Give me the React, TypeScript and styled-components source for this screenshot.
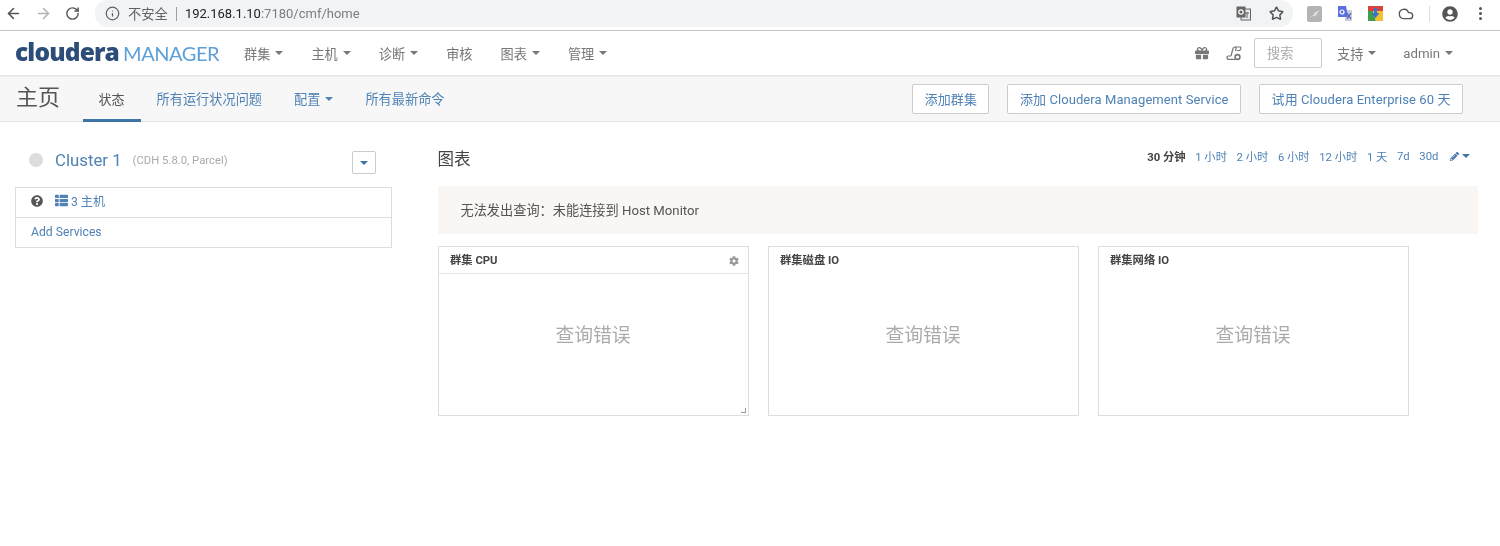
import styled, { createGlobalStyle } from "styled-components";
import { ArrowLeft, ArrowRight, RotateCw, Info, Star, Cloud } from "lucide-react";
import { FaCog, FaGift, FaPencilAlt, FaQuestionCircle, FaThList, FaUserCircle } from "react-icons/fa";

const GlobalStyle = createGlobalStyle`
  html, body {
    margin: 0;
    background: #fff;
    font-family: Roboto, "Noto Sans CJK SC", sans-serif;
    font-size: 13px;
    color: #555;
  }
`;

const Page = styled.div`
  width: 1500px;
  height: 546px;
  overflow: hidden;
  filter: blur(0.4px);
`;

const BrowserBar = styled.div`
  height: 31px;
  box-sizing: border-box;
  border-bottom: 1px solid #c4c5c7;
  display: flex;
  align-items: flex-start;
  padding-left: 5px;
  color: #5f6368;
`;

const BrowserButtons = styled.div`
  width: 90px;
  height: 27px;
  display: flex;
  align-items: center;
  gap: 13px;
`;

const Omnibox = styled.div`
  width: 1198px;
  height: 27px;
  box-sizing: border-box;
  background: #f1f3f4;
  border-radius: 13px;
  display: flex;
  align-items: center;
  padding: 0 9px 0 10px;
`;

const InsecureLabel = styled.span`
  margin-left: 8px;
  color: #5f6368;
  font-size: 13.3px;
`;

const Divider = styled.span`
  width: 1px;
  height: 14px;
  background: #9aa0a6;
  margin: 0 8px;
`;

const Host = styled.span`
  color: #202124;
  font-size: 13px;
`;

const HostRest = styled.span`
  color: #7a7e83;
  font-size: 13px;
`;

const OmniIcons = styled.div`
  margin-left: auto;
  display: flex;
  align-items: center;
  gap: 18px;
`;

const Extensions = styled.div`
  height: 27px;
  display: flex;
  align-items: center;
  gap: 15px;
  margin-left: 14px;
`;

const ToolbarRule = styled.span`
  width: 1px;
  height: 16px;
  background: #dadce0;
  margin-right: -3px;
`;

const MenuDots = styled.span`
  display: flex;
  flex-direction: column;
  gap: 2px;
  margin-left: 6px;
  span {
    width: 3px;
    height: 3px;
    border-radius: 50%;
    background: #555;
  }
`;

const NavBar = styled.div`
  height: 45px;
  box-sizing: border-box;
  border-bottom: 1px solid #e8e8e8;
  display: flex;
  align-items: center;
  padding: 0 47px 0 15px;
  font-size: 13.2px;
`;

const Logo = styled.div`
  width: 229px;
  display: flex;
  align-items: baseline;
  white-space: nowrap;
  margin-top: -3px;
`;

const LogoMain = styled.span`
  font-family: "Open Sans", sans-serif;
  font-weight: 800;
  font-size: 24.5px;
  letter-spacing: -0.85px;
  color: #2b4d78;
`;

const LogoSub = styled.span`
  font-family: Lato, sans-serif;
  font-size: 20px;
  letter-spacing: -0.45px;
  color: #5d9fd8;
  margin-left: 4px;
`;

const NavItems = styled.div`
  display: flex;
  gap: 28px;
`;

const NavItem = styled.span<{ $gap?: number }>`
  color: #777;
  display: inline-flex;
  align-items: center;
  white-space: nowrap;
  margin-left: ${(p) => p.$gap || 0}px;
`;

const Caret = styled.span<{ $color?: string; $gap?: number }>`
  display: inline-block;
  width: 0;
  height: 0;
  margin-left: ${(p) => (p.$gap === undefined ? 5 : p.$gap)}px;
  border-left: 4px solid transparent;
  border-right: 4px solid transparent;
  border-top: 4px solid ${(p) => p.$color || "#777"};
`;

const NavRight = styled.div`
  margin-left: auto;
  display: flex;
  align-items: center;
  color: #777;
`;

const NavIcon = styled.span`
  display: flex;
  margin-right: 12px;
  & + & {
    margin-left: 5px;
  }
`;

const SearchBox = styled.div`
  width: 68px;
  height: 30px;
  box-sizing: border-box;
  margin-right: 15px;
  border: 1px solid #ccc;
  border-radius: 2px;
  padding-left: 12px;
  line-height: 29px;
  color: #aaa;
`;

const SubBar = styled.div`
  height: 46px;
  box-sizing: border-box;
  background: #f7f7f7;
  border-top: 1px solid #eee;
  border-bottom: 1px solid #e5e5e5;
  display: flex;
  padding: 0 37px 0 16px;
  font-size: 13.2px;
`;

const PageTitle = styled.h1`
  margin: 0 23px 0 0;
  font-size: 22px;
  font-weight: 400;
  line-height: 42px;
  color: #555;
`;

const Tab = styled.a<{ $active?: boolean }>`
  height: 45px;
  box-sizing: border-box;
  padding: 1px 16px 0 ${(p) => (p.$active ? "15.5px" : "16px")};
  display: flex;
  align-items: center;
  font-size: ${(p) => (p.$active ? "13px" : "inherit")};
  color: ${(p) => (p.$active ? "#555" : "#4f82b5")};
  border-bottom: 3px solid ${(p) => (p.$active ? "#3f74a8" : "transparent")};
  white-space: nowrap;
`;

const SubActions = styled.div`
  margin-left: auto;
  display: flex;
  gap: 18px;
  padding-top: 7px;
`;

const ActionButton = styled.button`
  height: 30px;
  box-sizing: border-box;
  background: #fff;
  border: 1px solid #ccc;
  border-radius: 2px;
  padding: 0 11.5px 2px;
  font: inherit;
  font-size: 13px;
  letter-spacing: 0.08px;
  color: #4f82b5;
  white-space: nowrap;
`;

const Content = styled.div`
  display: flex;
  padding: 0 22px 0 15px;
`;

const LeftColumn = styled.div`
  width: 377px;
  margin-right: 45.5px;
  flex: none;
`;

const ClusterHead = styled.div`
  height: 65px;
  display: flex;
  align-items: center;
  padding: 11px 16px 0 14px;
  box-sizing: border-box;
`;

const StatusDot = styled.span`
  width: 14px;
  height: 14px;
  border-radius: 50%;
  background: #dcdcdc;
  margin-right: 12px;
`;

const ClusterName = styled.a`
  font-size: 16.8px;
  color: #4f82b5;
`;

const ClusterMeta = styled.span`
  margin-left: 11px;
  font-size: 11.3px;
  color: #aaa;
`;

const DropButton = styled.button`
  margin-left: auto;
  width: 24px;
  height: 23px;
  margin-top: 5px;
  padding: 0;
  background: #fff;
  border: 1px solid #ccc;
  border-radius: 2px;
  display: flex;
  align-items: center;
  justify-content: center;
`;

const ServiceTable = styled.div`
  border: 1px solid #ddd;
`;

const ServiceRow = styled.div`
  height: 29px;
  box-sizing: border-box;
  display: flex;
  align-items: center;
  padding: 0 0 4px 15px;
  color: #4f82b5;
  font-size: 12.2px;
  & + & {
    border-top: 1px solid #ddd;
    height: 30px;
    padding-bottom: 2px;
  }
`;

const HostLink = styled.span`
  display: flex;
  align-items: center;
  margin-left: 12px;
  gap: 3px;
`;

const RightColumn = styled.div`
  width: 1040.5px;
`;

const ChartsHead = styled.div`
  height: 64px;
  box-sizing: border-box;
  display: flex;
  align-items: center;
  padding: 8px 8px 0 0;
`;

const ChartsTitle = styled.h2`
  margin: 0;
  font-size: 16.5px;
  font-weight: 400;
  color: #444;
`;

const Ranges = styled.div`
  margin-left: auto;
  margin-bottom: 4px;
  display: flex;
  align-items: center;
  gap: 9.6px;
  font-size: 11.3px;
  color: #4f82b5;
`;

const RangeNow = styled.span`
  font-weight: 700;
  color: #444;
`;

const EditRange = styled.span`
  display: inline-flex;
  align-items: center;
  margin-left: 2px;
`;

const Alert = styled.div`
  height: 48px;
  box-sizing: border-box;
  background: #f9f6f4;
  padding-left: 23px;
  line-height: 49px;
  color: #555;
  font-size: 13.2px;
`;

const ChartRow = styled.div`
  display: flex;
  gap: 19px;
  margin-top: 12px;
`;

const Chart = styled.div`
  position: relative;
  width: 311px;
  height: 170px;
  box-sizing: border-box;
  border: 1px solid #ddd;
  display: flex;
  flex-direction: column;
`;

const ChartHeader = styled.div<{ $ruled?: boolean }>`
  height: 27px;
  flex: none;
  box-sizing: border-box;
  display: flex;
  align-items: center;
  justify-content: space-between;
  padding: 0 9px 2px 11.5px;
  font-size: 11.3px;
  font-weight: 700;
  color: #444;
  border-bottom: 1px solid ${(p) => (p.$ruled ? "#e5e5e5" : "transparent")};
`;

const ChartError = styled.div`
  flex: 1;
  display: flex;
  align-items: center;
  justify-content: center;
  font-size: 18.8px;
  color: #aaa;
  padding-bottom: 22px;
`;

const ResizeHandle = styled.span`
  position: absolute;
  right: 2px;
  bottom: 2px;
  width: 4px;
  height: 4px;
  border-right: 1px solid #999;
  border-bottom: 1px solid #999;
`;

const ranges = ["1 小时", "2 小时", "6 小时", "12 小时", "1 天", "7d", "30d"];

function TranslateIcon() {
  return (
    <svg width="15" height="15" viewBox="0 0 15 15">
      <rect x="5" y="3" width="9.5" height="11" fill="#e8e8e8" stroke="#666" strokeWidth="1" />
      <rect x="0.5" y="0.5" width="9" height="11" fill="#666" />
      <circle cx="5" cy="6" r="2.2" fill="none" stroke="#fff" strokeWidth="1.2" />
      <path d="M9 7h4M11 6v6" stroke="#666" strokeWidth="1" />
    </svg>
  );
}

function GrayExtension() {
  return (
    <svg width="15" height="16" viewBox="0 0 15 16">
      <rect width="15" height="16" rx="2" fill="#b4b4b4" />
      <path d="M3 11 L8 8 L6.5 7.5 L13 4 L9 8.5 L10.5 9 Z" fill="#e6e6e6" />
    </svg>
  );
}

function TranslateExtension() {
  return (
    <svg width="16" height="16" viewBox="0 0 16 16">
      <path d="M8 4h7v11H8z" fill="#c9cde0" />
      <path d="M1 0h8l2 11H1z" fill="#5b6fe0" />
      <circle cx="5" cy="6" r="2" fill="none" stroke="#fff" strokeWidth="1.2" />
      <path d="M10 7l4 6M14 7l-4 6" stroke="#5866a8" strokeWidth="1.3" />
    </svg>
  );
}

function DownloadExtension() {
  return (
    <svg width="15" height="15" viewBox="0 0 15 15">
      <path d="M0 0h15v5H0z" fill="#d8443a" />
      <path d="M0 5l5 0 3 10H0z" fill="#3f9e4d" />
      <path d="M8 15l-3-10h10v10z" fill="#f2c230" />
      <path d="M6 2h3v5h2.5l-4 5-4-5H6z" fill="#3b6fd0" />
    </svg>
  );
}

function ScrollGearIcon() {
  return (
    <svg width="16" height="15" viewBox="0 0 16 15" fill="none" stroke="#777" strokeWidth="1.2">
      <path d="M5 10 L7 2.5 Q7.6 1 9 1 H14 Q15.3 1.2 14.6 3 L13.8 4.5 H11" />
      <path d="M9 1 Q10.6 1.4 10 3.2 L9.4 5" />
      <path d="M5 10 H2.5 Q0.7 10.3 1 12 Q1.3 13.4 3 13.4 H9" />
      <circle cx="11.5" cy="11" r="2.4" strokeWidth="1.6" />
    </svg>
  );
}

export default function App() {
  return (
    <Page>
      <GlobalStyle />
      <BrowserBar>
        <BrowserButtons>
          <ArrowLeft size={17} color="#555" strokeWidth={2.3} />
          <ArrowRight size={17} color="#b5b5b5" strokeWidth={2.3} />
          <RotateCw size={15} color="#555" strokeWidth={2.3} />
        </BrowserButtons>
        <Omnibox>
          <Info size={15} strokeWidth={2} />
          <InsecureLabel>不安全</InsecureLabel>
          <Divider />
          <Host>192.168.1.10</Host>
          <HostRest>:7180/cmf/home</HostRest>
          <OmniIcons>
            <TranslateIcon />
            <Star size={15} color="#555" strokeWidth={2.4} />
          </OmniIcons>
        </Omnibox>
        <Extensions>
          <GrayExtension />
          <TranslateExtension />
          <DownloadExtension />
          <Cloud size={16} color="#555" strokeWidth={2} />
          <ToolbarRule />
          <FaUserCircle size={16} color="#555" />
          <MenuDots><span /><span /><span /></MenuDots>
        </Extensions>
      </BrowserBar>

      <NavBar>
        <Logo>
          <LogoMain>cloudera</LogoMain>
          <LogoSub>MANAGER</LogoSub>
        </Logo>
        <NavItems>
          <NavItem>群集<Caret /></NavItem>
          <NavItem>主机<Caret /></NavItem>
          <NavItem>诊断<Caret /></NavItem>
          <NavItem>审核</NavItem>
          <NavItem>图表<Caret /></NavItem>
          <NavItem>管理<Caret /></NavItem>
        </NavItems>
        <NavRight>
          <NavIcon><FaGift size={14} /></NavIcon>
          <NavIcon><ScrollGearIcon /></NavIcon>
          <SearchBox>搜索</SearchBox>
          <NavItem>支持<Caret /></NavItem>
          <NavItem $gap={27}>admin<Caret /></NavItem>
        </NavRight>
      </NavBar>

      <SubBar>
        <PageTitle>主页</PageTitle>
        <Tab $active>状态</Tab>
        <Tab>所有运行状况问题</Tab>
        <Tab>配置<Caret $color="#4f82b5" /></Tab>
        <Tab>所有最新命令</Tab>
        <SubActions>
          <ActionButton>添加群集</ActionButton>
          <ActionButton>添加 Cloudera Management Service</ActionButton>
          <ActionButton>试用 Cloudera Enterprise 60 天</ActionButton>
        </SubActions>
      </SubBar>

      <Content>
        <LeftColumn>
          <ClusterHead>
            <StatusDot />
            <ClusterName>Cluster 1</ClusterName>
            <ClusterMeta>(CDH 5.8.0, Parcel)</ClusterMeta>
            <DropButton><Caret $color="#3f74a8" $gap={0} /></DropButton>
          </ClusterHead>
          <ServiceTable>
            <ServiceRow>
              <FaQuestionCircle size={12} color="#555" />
              <HostLink><FaThList size={13} />3 主机</HostLink>
            </ServiceRow>
            <ServiceRow>Add Services</ServiceRow>
          </ServiceTable>
        </LeftColumn>

        <RightColumn>
          <ChartsHead>
            <ChartsTitle>图表</ChartsTitle>
            <Ranges>
              <RangeNow>30 分钟</RangeNow>
              {ranges.map((r) => <span key={r}>{r}</span>)}
              <EditRange>
                <FaPencilAlt size={9} color="#3f74a8" />
                <Caret $color="#3f74a8" $gap={3} />
              </EditRange>
            </Ranges>
          </ChartsHead>
          <Alert>无法发出查询：未能连接到 Host Monitor</Alert>
          <ChartRow>
            <Chart>
              <ChartHeader $ruled>
                群集 CPU
                <FaCog size={10} color="#999" style={{ marginTop: 4 }} />
              </ChartHeader>
              <ChartError>查询错误</ChartError>
              <ResizeHandle />
            </Chart>
            <Chart>
              <ChartHeader>群集磁盘 IO</ChartHeader>
              <ChartError>查询错误</ChartError>
            </Chart>
            <Chart>
              <ChartHeader>群集网络 IO</ChartHeader>
              <ChartError>查询错误</ChartError>
            </Chart>
          </ChartRow>
        </RightColumn>
      </Content>
    </Page>
  );
}
